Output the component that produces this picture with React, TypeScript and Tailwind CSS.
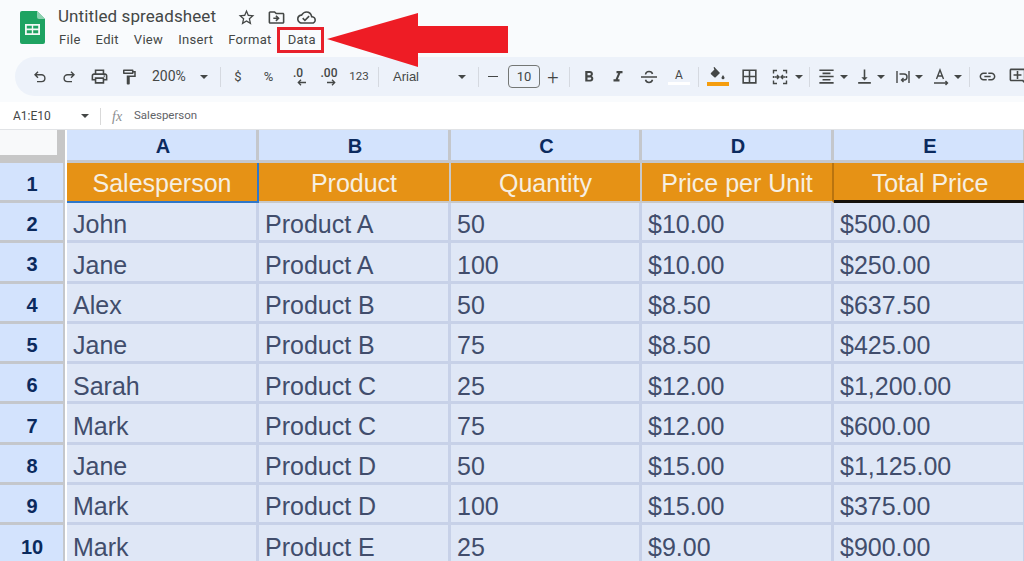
import type { ReactNode } from "react";
import {
  MdBorderAll,
  MdFormatAlignCenter,
  MdFormatBold,
  MdFormatItalic,
  MdLink,
  MdOutlineAddComment,
  MdOutlineCloudDone,
  MdOutlineDriveFileMove,
  MdOutlineFormatPaint,
  MdOutlinePrint,
  MdStarBorder,
  MdVerticalAlignBottom,
} from "react-icons/md";

const rows = [
  ["John", "Product A", "50", "$10.00", "$500.00"],
  ["Jane", "Product A", "100", "$10.00", "$250.00"],
  ["Alex", "Product B", "50", "$8.50", "$637.50"],
  ["Jane", "Product B", "75", "$8.50", "$425.00"],
  ["Sarah", "Product C", "25", "$12.00", "$1,200.00"],
  ["Mark", "Product C", "75", "$12.00", "$600.00"],
  ["Jane", "Product D", "50", "$15.00", "$1,125.00"],
  ["Mark", "Product D", "100", "$15.00", "$375.00"],
  ["Mark", "Product E", "25", "$9.00", "$900.00"],
];

const headers = ["Salesperson", "Product", "Quantity", "Price per Unit", "Total Price"];
const menu = ["File", "Edit", "View", "Insert", "Format"];

function Caret() {
  return <span className="w-0 h-0 border-x-[4px] border-x-transparent border-t-[4px] border-t-[#444746]" />;
}

function Sep() {
  return <span className="w-px h-5 bg-[#d5d9e0] shrink-0" />;
}

function Tool({ w, children }: { w: string; children: ReactNode }) {
  return <div className={`${w} h-full flex items-center justify-center shrink-0 text-[#444746]`}>{children}</div>;
}

function SheetsLogo() {
  return (
    <svg width="25" height="33" viewBox="0 0 25 33">
      <path d="M2 0h15l8 8v23a2 2 0 0 1-2 2H2a2 2 0 0 1-2-2V2a2 2 0 0 1 2-2z" fill="#1ea362" />
      <path d="M17 0l8 8h-6a2 2 0 0 1-2-2z" fill="#8ed1b1" />
      <path d="M5 13h15v11H5z M6.800 14.800v2.800h5v-2.800z M13.200 14.800v2.800h5v-2.800z M6.800 19.200v3h5v-3z M13.200 19.200v3h5v-3z" fill="#f1f8f4" fillRule="evenodd" />
    </svg>
  );
}

function UndoIcon({ flip }: { flip?: boolean }) {
  return (
    <svg width="12" height="12" viewBox="0 0 12 12" fill="none" stroke="#444746" strokeWidth="1.400" className={flip ? "-scale-x-100" : ""}>
      <path d="M4 .8L1 3.800 4 6.800M1 3.800h6.500a3.200 3.200 0 0 1 0 6.800H3" />
    </svg>
  );
}

function ArrowGlyph({ left }: { left?: boolean }) {
  return (
    <svg width="9" height="7" viewBox="0 0 9 7" fill="none" stroke="#444746" strokeWidth="1.300" className={left ? "" : "-scale-x-100"}>
      <path d="M9 3.500H1.500M4 .8L1.300 3.500 4 6.200" />
    </svg>
  );
}

function StrikeIcon() {
  return (
    <svg width="16" height="14" viewBox="0 0 16 14" fill="none" stroke="#444746" strokeWidth="1.500">
      <path d="M0 7h16M4.500 4.500C4.800 2.500 6.200 1.500 8 1.500s3.200 1 3.500 2.500M4.500 9.800C5 11.600 6.200 12.500 8 12.500s3-.9 3.500-2.700" />
    </svg>
  );
}

function MergeIcon() {
  return (
    <svg width="16" height="16" viewBox="0 0 16 16" fill="none" stroke="#444746" strokeWidth="1.400">
      <path d="M5 1.500H1.500v3M1.500 7v2M1.500 11.500v3H5M11 1.500h3.500v3M14.500 7v2M14.500 11.500v3H11" />
      <path d="M2.500 8h4M5 6l2 2-2 2M13.500 8h-4M11 6L9 8l2 2" />
    </svg>
  );
}

function WrapIcon() {
  return (
    <svg width="14" height="14" viewBox="0 0 14 14" fill="none" stroke="#444746" strokeWidth="1.400">
      <path d="M1 1v12M13 1v12M3.500 4H8a2.500 2.500 0 0 1 0 6H5.500M7.500 8l-2 2 2 2" />
    </svg>
  );
}

function RotateIcon() {
  return (
    <svg width="16" height="18" viewBox="0 0 16 18" fill="none" stroke="#444746" strokeWidth="1.400">
      <path d="M3.500 11L7 2l3.500 9M4.800 8h4.400M1 15h13M12.500 13l2 2-2 2" />
    </svg>
  );
}

function FillIcon() {
  return (
    <svg width="16" height="14" viewBox="0 0 16 14">
      <path d="M3.500 0.500l1-0.500 1.200 1.600 4.300 4.300-4.300 4.300a1 1 0 0 1-1.400 0L1 7.300a1 1 0 0 1 0-1.400l3.400-3.400z" fill="#444746" />
      <path d="M13 8c1 1.400 1.500 2.100 1.500 2.800a1.500 1.500 0 0 1-3 0c0-.7.500-1.400 1.500-2.800z" fill="#444746" />
    </svg>
  );
}

function Toolbar() {
  return (
    <div className="ml-[15px] h-[39px] w-[1040px] rounded-l-[20px] bg-[#edf2fa] flex items-center font-['Roboto',sans-serif] text-[#444746] pl-[10px]">
      <Tool w="w-[29px]"><UndoIcon /></Tool>
      <Tool w="w-[30px]"><UndoIcon flip /></Tool>
      <Tool w="w-[30px]"><MdOutlinePrint size={19} /></Tool>
      <Tool w="w-[29px]"><MdOutlineFormatPaint size={18} /></Tool>
      <div className="w-[56px] pl-[9px] text-[14px] shrink-0">200%</div>
      <Tool w="w-[10px]"><Caret /></Tool>
      <div className="w-[11px]" />
      <Sep />
      <Tool w="w-[34px]"><span className="text-[13px]">$</span></Tool>
      <Tool w="w-[27px]"><span className="text-[13px]">%</span></Tool>
      <Tool w="w-[32px]">
        <div className="flex flex-col items-center leading-none">
          <span className="text-[12px] font-medium leading-[11px]">.0</span>
          <span className="ml-[6px]"><ArrowGlyph left /></span>
        </div>
      </Tool>
      <Tool w="w-[30px]">
        <div className="flex flex-col items-center leading-none">
          <span className="text-[12px] font-medium leading-[11px]">.00</span>
          <span className="ml-[6px]"><ArrowGlyph /></span>
        </div>
      </Tool>
      <Tool w="w-[30px]"><span className="text-[11.500px]">123</span></Tool>
      <div className="w-[4px]" />
      <Sep />
      <div className="w-[78px] pl-[14px] text-[13px] font-['Liberation_Sans',sans-serif] shrink-0">Arial</div>
      <Tool w="w-[9px]"><Caret /></Tool>
      <div className="w-[12px]" />
      <Sep />
      <Tool w="w-[28px]"><span className="w-[10px] h-[1.500px] bg-[#444746]" /></Tool>
      <div className="w-[32px] h-[23px] border border-[#747775] rounded-[4px] flex items-center justify-center text-[13px] shrink-0 ml-[1px]">10</div>
      <Tool w="w-[26px]"><span className="text-[20px] font-light leading-none">+</span></Tool>
      <div className="w-[3px]" />
      <Sep />
      <Tool w="w-[37px]"><MdFormatBold size={18} /></Tool>
      <Tool w="w-[22px]"><MdFormatItalic size={18} /></Tool>
      <Tool w="w-[39px]"><StrikeIcon /></Tool>
      <Tool w="w-[22px]">
        <div className="flex flex-col items-center w-[22px]">
          <span className="text-[12px] leading-[14px]">A</span>
          <span className="w-[22px] h-[3px] bg-white" />
        </div>
      </Tool>
      <div className="w-[8px]" />
      <Sep />
      <Tool w="w-[38px]">
        <div className="flex flex-col items-center w-[22px] gap-[1px]">
          <FillIcon />
          <span className="w-[22px] h-[4px] bg-[#f59d0e]" />
        </div>
      </Tool>
      <Tool w="w-[24px]"><MdBorderAll size={19} /></Tool>
      <div className="w-[4px]" />
      <Tool w="w-[30px]"><MergeIcon /></Tool>
      <Tool w="w-[8px]"><Caret /></Tool>
      <div className="w-[6px]" />
      <Sep />
      <div className="w-[2px]" />
      <Tool w="w-[28px]"><MdFormatAlignCenter size={19} /></Tool>
      <Tool w="w-[7px]"><Caret /></Tool>
      <div className="w-[4px]" />
      <Tool w="w-[26px]"><MdVerticalAlignBottom size={19} /></Tool>
      <Tool w="w-[8px]"><Caret /></Tool>
      <div className="w-[6px]" />
      <Tool w="w-[24px]"><WrapIcon /></Tool>
      <Tool w="w-[8px]"><Caret /></Tool>
      <div className="w-[5px]" />
      <Tool w="w-[26px]"><RotateIcon /></Tool>
      <Tool w="w-[8px]"><Caret /></Tool>
      <div className="w-[7px]" />
      <Sep />
      <Tool w="w-[34px]"><MdLink size={19} /></Tool>
      <Tool w="w-[26px]"><MdOutlineAddComment size={19} /></Tool>
    </div>
  );
}

function Header() {
  return (
    <div className="relative h-[102px] bg-[#f9fbfd] overflow-hidden">
      <div className="flex h-[57px] pl-[20px] pt-[10px]">
        <div className="pt-[1px]"><SheetsLogo /></div>
        <div className="ml-[13px] -mt-[5px]">
          <div className="flex items-center h-[24px] font-['Roboto',sans-serif] text-[#444746]">
            <span className="text-[17px] w-[172px] tracking-[0.1px]">Untitled spreadsheet</span>
            <MdStarBorder size={19} className="ml-[7px]" />
            <MdOutlineDriveFileMove size={19} className="ml-[11px]" />
            <MdOutlineCloudDone size={19} className="ml-[11px]" />
          </div>
          <div className="flex items-center h-[24px] -mt-[1px] pl-px font-['Roboto',sans-serif] text-[13px] tracking-[0.3px] text-[#444746]">
            {menu.map((m) => (
              <span key={m} className="mr-[15px]">{m}</span>
            ))}
            <span className="ml-[1px]">Data</span>
          </div>
        </div>
      </div>
      <Toolbar />
    </div>
  );
}

function FormulaBar() {
  return (
    <div className="h-[28px] pt-px bg-white flex items-center border-b border-[#e1e3e6] font-['Roboto',sans-serif] text-[#444746]">
      <span className="w-[81px] pl-[13px] text-[12px]">A1:E10</span>
      <Caret />
      <span className="w-px h-[17px] bg-[#d9d9d9] ml-[11px]" />
      <span className="ml-[11px] w-[22px] text-[14px] italic font-['Liberation_Serif',serif] text-[#8a8d90]">fx</span>
      <span className="text-[11.500px] text-[#5f6368]">Salesperson</span>
    </div>
  );
}

function Sheet() {
  return (
    <div className="grid grid-cols-[67px_192px_192px_191px_192px_192px] grid-rows-[33px_40px_repeat(9,40.3px)] font-['Liberation_Sans',sans-serif]">
      <div className="bg-[#f8f9fa] border-r-[8px] border-b-[8px] border-[#c7c7c7] mr-[2px]" />
      {["A", "B", "C", "D", "E"].map((c) => (
        <div key={c} className="bg-[#d3e3fd] border-r-[3px] border-b-[3px] border-[#c4c7cc] flex items-center justify-center pl-[3px] pt-px text-[20px] font-bold text-[#0b2a5e]">
          {c}
        </div>
      ))}
      <div className="bg-[#d3e3fd] border-r-[2px] border-b-[3px] border-[#c4c7cc] mr-[2px] flex items-center justify-center pt-[5px] pl-px text-[20px] font-bold text-[#0b2a5e]">1</div>
      {headers.map((h, i) => (
        <div
          key={h}
          className={`bg-[#e69215] flex items-center justify-center text-[25px] text-[#f6efe2] ${
            i === 0
              ? "pt-[3px] border-r-2 border-b-2 border-[#2f77c9]"
              : i === 4
                ? "pt-[4px] border-b-[3px] border-b-[#16120c]"
                : i === 3
                  ? "pt-[3px] border-r-2 border-r-[#b9740f] border-b-2 border-b-[#c9c9c9]"
                  : "pt-[3px] border-r-2 border-b-2 border-[#c9c9c9]"
          }`}
        >
          {h}
        </div>
      ))}
      {rows.map((r, i) => (
        <div key={i} className="contents">
          <div className="bg-[#d3e3fd] border-r-[2px] border-b-[3px] border-[#c4c7cc] mr-[2px] flex items-center justify-center pt-[5px] pl-px text-[20px] font-bold text-[#0b2a5e]">
            {i + 2}
          </div>
          {r.map((v, j) => (
            <div key={j} className="bg-[#dfe7f6] border-r-[3px] border-b-[3px] border-[#c7d1e8] flex items-center pl-[6px] pt-[7px] text-[25px] text-[#414d6c]">
              {v}
            </div>
          ))}
        </div>
      ))}
    </div>
  );
}

export default function App() {
  return (
    <div className="relative h-[561px] w-[1024px] overflow-hidden bg-white">
      <Header />
      <FormulaBar />
      <Sheet />
      {/* annotation drawn on top of the screenshot */}
      <div className="absolute left-[277px] top-[27px] w-[47px] h-[26px] border-[3px] border-[#e8212b]" />
      <svg className="absolute left-[326px] top-[12px]" width="184" height="56" viewBox="0 0 184 56">
        <path d="M1 27L92 1v13h90v27H92v14z" fill="#ee1c25" />
      </svg>
    </div>
  );
}
